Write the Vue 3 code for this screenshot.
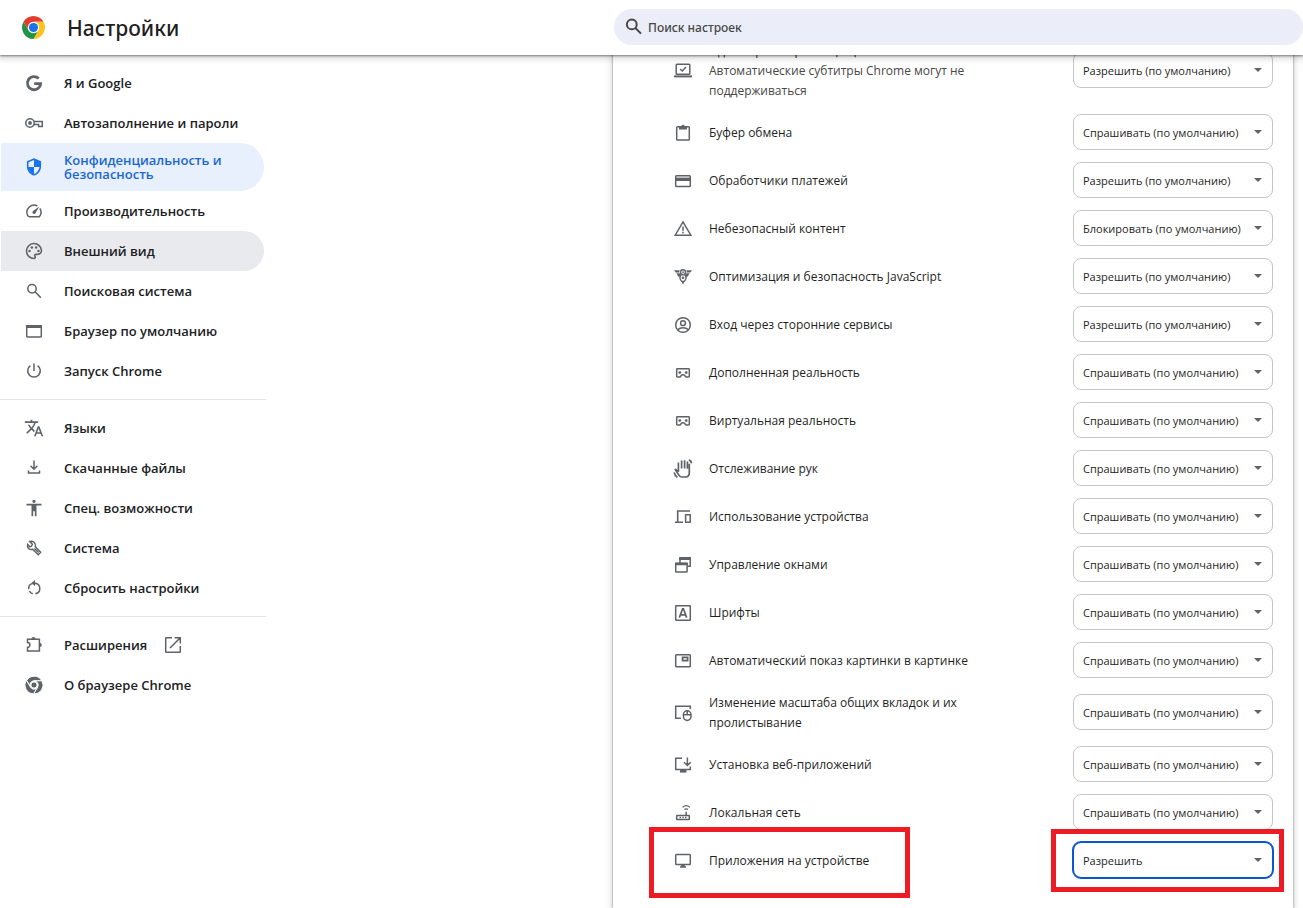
<template>
  <div class="settings">
    <header class="toolbar">
      <div class="brand">
        <svg class="logo" viewBox="0 0 48 48" aria-hidden="true">
          <circle cx="24" cy="24" r="12" fill="#fff" />
          <path fill="#e33b2e" d="M24 12H44.78a24 24 0 0 0-41.56 0L13.61 30A12 12 0 0 1 24 12Z" />
          <path fill="#fcc31e" d="M34.39 30 24 48A24 24 0 0 0 44.78 12H24A12 12 0 0 1 34.39 30Z" />
          <path fill="#229342" d="M13.61 30 3.22 12A24 24 0 0 0 24 48L34.39 30A12 12 0 0 1 13.61 30Z" />
          <circle cx="24" cy="24" r="9.5" fill="#1a73e8" />
        </svg>
        <h1>Настройки</h1>
      </div>
      <label class="search">
        <svg class="icon" viewBox="0 0 20 20" aria-hidden="true">
          <circle cx="7.8" cy="7.4" r="4.9" />
          <path d="M11.4 11 17 16.6" />
        </svg>
        <input v-model="query" type="text" placeholder="Поиск настроек" aria-label="Поиск настроек" />
      </label>
    </header>

    <div class="content">
      <nav class="menu">
        <div v-for="(group, i) in menu" :key="i" class="menu-group">
          <a
            v-for="item in group"
            :key="item.label"
            href="#"
            class="menu-item"
            :class="{ active: item.active, hovered: item.hovered }"
            @click.prevent
          >
            <svg class="icon" :viewBox="ICONS[item.icon].box" aria-hidden="true" v-html="ICONS[item.icon].body"></svg>
            <span>{{ item.label }}</span>
            <svg v-if="item.external" class="icon external" viewBox="0 0 20 20" aria-hidden="true" v-html="ICONS.external.body"></svg>
          </a>
        </div>
      </nav>

      <main class="card">
        <div v-for="row in rows" :key="row.id" class="row">
          <svg class="icon" :viewBox="ICONS[row.icon].box" aria-hidden="true" v-html="ICONS[row.icon].body"></svg>
          <label :for="row.id" class="row-label">
            {{ row.label }}
            <span v-if="row.sub" class="row-sub">{{ row.sub }}</span>
          </label>
          <div class="select-wrap">
            <select :id="row.id" v-model="row.value" :class="{ focused: row.marked }">
              <option v-for="option in OPTIONS" :key="option">{{ option }}</option>
            </select>
          </div>
          <template v-if="row.marked">
            <div class="mark mark-label"></div>
            <div class="mark mark-select"></div>
          </template>
        </div>
      </main>
    </div>
  </div>
</template>

<script setup>
import { ref } from "vue";

const ASK = "Спрашивать (по умолчанию)";
const ALLOW = "Разрешить (по умолчанию)";
const BLOCK = "Блокировать (по умолчанию)";
const OPTIONS = [ASK, ALLOW, BLOCK, "Разрешить"];

const SOLID = 'fill="currentColor" stroke="none"';

function icon(body, size = 20) {
  return { box: `0 0 ${size} ${size}`, body };
}

function solid(d) {
  return icon(`<path ${SOLID} d="${d}"/>`, 24);
}

const ICONS = {
  google: icon('<path stroke-width="2.8" d="M14.7 5.5A6.6 6.6 0 1 0 16.6 10.6H10.2"/>'),
  key: icon(`<circle cx="6" cy="10" r="4.2"/><circle ${SOLID} cx="6" cy="10" r="1.9"/><path d="M10 8.4H18.3V13.4H14.6V11.6H10"/>`),
  shield: solid("M12 1.5 3.5 5v6c0 5.4 3.6 10 8.5 11.3 4.9-1.3 8.5-5.9 8.5-11.3V5L12 1.5zM12 12h6.6c-.5 4-3 7.1-6.6 8.3V12H5.4V6.3L12 3.6V12z"),
  speed: icon(`<path d="M5 15.7H15.3A7.2 7.2 0 0 0 15.9 7.4M13.4 5A7.2 7.2 0 0 0 3.7 14.6L5 15.7"/><path ${SOLID} d="M15.2 5.6 11.6 12a1.7 1.7 0 1 1-2.6-2.1z"/>`),
  palette: icon(
    `<path stroke-width="1.9" d="M12 21a9 9 0 1 1 9-9.8c0 3-2.3 4.8-5 4.8h-1.8c-1.2 0-1.9 1.3-1.1 2.3 1 1.3.2 2.7-1.1 2.7z"/><g ${SOLID}><circle cx="6.6" cy="12" r="1.5"/><circle cx="9.4" cy="7.7" r="1.5"/><circle cx="14.6" cy="7.7" r="1.5"/><circle cx="17.4" cy="12" r="1.5"/></g>`,
    24
  ),
  search: icon('<circle cx="8" cy="7.7" r="4.2"/><path d="M11 10.8 16.8 16.6"/>'),
  browser: icon(`<rect x="2.7" y="4.7" width="14.6" height="11.2" rx=".6"/><path ${SOLID} d="M2 4h16v3H2z"/>`),
  power: icon('<path d="M10 2.5V10M6.4 4.6A6.3 6.3 0 1 0 13.6 4.6"/>'),
  translate: solid(
    "M12.87 15.07l-2.54-2.51.03-.03c1.74-1.94 2.98-4.17 3.71-6.53H17V4h-7V2H8v2H1v1.99h11.17C11.5 7.92 10.44 9.75 9 11.35 8.07 10.32 7.3 9.19 6.69 8h-2c.73 1.63 1.73 3.17 2.98 4.56l-5.09 5.02L4 19l5-5 3.11 3.11.76-2.04zM18.5 10h-2L12 22h2l1.12-3h4.75L21 22h2l-4.5-12zm-2.62 7l1.62-4.33L19.12 17h-3.24z"
  ),
  download: icon('<path d="M10 2.5V11M6.6 7.8 10 11.2 13.4 7.8M4.5 12.4V15.1H15.5V12.4"/>'),
  accessibility: solid("M12 2a2 2 0 1 1 0 4 2 2 0 0 1 0-4zM21 9h-6v13h-2v-6h-2v6H9V9H3V7h18v2z"),
  wrench: icon('<path stroke-width="1.4" d="M5.6 3.4 8.4 6.2 7.6 8 5.8 8.8 3.6 6.4C2.6 9.6 5.4 12.2 8.7 11.3L14.2 16.8 16.7 14.3 11.3 8.7C12.2 5.4 9.4 2.4 5.6 3.4ZM10.4 10.4 14.6 14.6"/>'),
  reset: icon(`<path d="M11 5.2A5.3 5.3 0 0 1 11.4 15.7M8.8 15.7A5.3 5.3 0 0 1 5.4 13M4.8 11.2A5.3 5.3 0 0 1 8.6 5.4"/><path ${SOLID} d="M11 2V8.2L7.4 5.1z"/>`),
  extension: icon(`<path d="M3.5 4.2H15.4V15.9H3.5V12.4A2.4 2.4 0 0 0 3.5 7.6Z"/><path ${SOLID} d="M7.4 4a2 2 0 0 1 4 0zM15.8 8a2 2 0 0 1 0 4z"/>`),
  external: icon('<path d="M9 2.7H3.4A.7.7 0 0 0 2.7 3.4V16.6A.7.7 0 0 0 3.4 17.3H16.6A.7.7 0 0 0 17.3 16.6V11M11.6 2.7H17.3V8.4M17 3 7 13"/>'),
  chrome: icon(
    `<g fill="currentColor" stroke="#fff" stroke-width="2.4"><path d="M24 14H43a21 21 0 0 0-36.6-.8L15.3 29A10 10 0 0 1 24 14Z"/><path d="M32.7 29 22.8 45A21 21 0 0 0 43.2 14H24A10 10 0 0 1 32.7 29Z"/><path d="M15.3 29 5.6 12.6A21 21 0 0 0 23 45L32.7 29A10 10 0 0 1 15.3 29Z"/><circle cx="24" cy="24" r="7.5"/></g>`,
    48
  ),

  captions: icon(`<rect x="3.2" y="3.2" width="13.6" height="10" rx=".8"/><path d="M7.2 8 9.3 10 13 6"/><path ${SOLID} d="M1 14.4h18v2H1z"/>`),
  clipboard: icon(`<rect x="3.7" y="3.7" width="12.6" height="13.3" rx=".8"/><path ${SOLID} d="M6 3h2.4a1.7 1.7 0 0 1 3.2 0H14V6.4H6z"/>`),
  payment: icon(`<rect x="2.7" y="4.7" width="14.6" height="10.8" rx=".8"/><path ${SOLID} d="M2.7 6.6h14.6v3.4H2.7z"/>`),
  warning: icon('<path d="M10 2.9 17.8 16.2H2.2ZM10 7.4V11.8M10 12.8V14.4"/>'),
  javascript: icon(
    `<g stroke-width="1.4"><circle cx="10" cy="5.2" r="2.5"/><path d="M8.5 7.4Q6.6 9 7 11.2 7.4 13.4 8.8 14.4H11.2Q12.6 13.4 13 11.2 13.4 9 11.5 7.4"/></g><g ${SOLID}><path d="M1 3.2h5.6L6.2 5.4H2.6zM19 3.2h-5.6l.4 2.2h3.6zM3.4 6.2h3.2l.8 1.4-.8 2.2H5.4zM16.6 6.2h-3.2l-.8 1.4.8 2.2h1.2zM8.8 15h2.4L10 17.8z"/><circle cx="10" cy="5.2" r=".9"/><circle cx="10" cy="10.8" r="1.3"/></g>`
  ),
  account: icon('<circle cx="10" cy="10" r="7.3"/><circle cx="10" cy="8.2" r="2.4"/><path d="M4.7 14.6C7.5 12 12.5 12 15.3 14.6"/>'),
  vr: icon(`<path d="M4.4 5.7H15.6Q16.3 5.7 16.3 6.4V13.2Q16.3 13.9 15.6 13.9H13L10.8 11.8H9.2L7 13.9H4.4Q3.7 13.9 3.7 13.2V6.4Q3.7 5.7 4.4 5.7Z"/><g ${SOLID}><circle cx="6.8" cy="9.6" r="1.4"/><circle cx="13.2" cy="9.6" r="1.4"/></g>`),
  hand: icon(
    '<path stroke-width="1.7" d="M5.4 12.8V3.4M5.4 12.8 2 10 6 16.4Q7 18 9 18H12.4Q16.3 17.8 16.3 14V4.8M8.6 1.4V9.4M11.6 1.2V9.4M14.4 2.6V9.8M15.8 1.2Q18.4 1.5 18.5 4.4M1.2 13.4Q1.6 16.6 4.4 18.2"/>'
  ),
  device: icon('<path stroke-width="1.6" d="M17 4H4.7V14.8M2 15.2H10"/><rect x="12.6" y="7.8" width="4.6" height="7.4"/>'),
  windows: icon(
    `<path d="M7 8V3.2H17.2V11.2H14.4"/><rect x="2.7" y="8.4" width="11.4" height="8.6" rx=".6"/><g ${SOLID}><path d="M6.2 2H18V5H6.2zM2 7.6h12.8v2.6H2z"/></g>`
  ),
  fonts: icon('<rect x="2.7" y="2.7" width="14.6" height="14.6" rx=".5"/><path stroke-width="1.7" d="M6.3 14.6 9.6 5.8H10.4L13.7 14.6M7.5 11.8H12.5"/>'),
  pip: icon('<rect x="2.7" y="3.8" width="14.6" height="12" rx=".8"/><rect x="9.6" y="6.4" width="5" height="3.2" stroke-width="1.8"/>'),
  zoom: icon('<path d="M8 15.2H2.7V3.2H17.3V6"/><rect x="10.4" y="7.8" width="7.6" height="9.6" rx="3.8"/><path d="M14.2 7.8V11.6M10.4 11.8H18"/>'),
  install: icon(`<path d="M9 3.2H2.7V14.6H17.3V11.6M14.4 2.4V10.2M11 7.2 14.4 10.4 17.8 7.2"/><path ${SOLID} d="M7 15h6.4v2.6H7z"/>`),
  router: icon(
    `<rect x="3.7" y="12.6" width="12.6" height="4" rx=".4"/><path d="M6.5 14.6H8M9.3 14.6H10.8M12 14.6H13.5M13.2 8.8V12.6"/><path stroke-width="1.3" d="M9.6 4.2Q13.2 1.2 16.8 4.2M11.4 6.6Q13.2 5.2 15 6.6"/>`
  ),
  monitor: icon(`<rect x="2.7" y="3.4" width="14.6" height="10.2" rx=".8"/><path ${SOLID} d="M8.2 13.6h3.6v1.6H13v1.6H7v-1.6h1.2z"/>`),
};

const query = ref("");

const menu = [
  [
    { icon: "google", label: "Я и Google" },
    { icon: "key", label: "Автозаполнение и пароли" },
    { icon: "shield", label: "Конфиденциальность и безопасность", active: true },
    { icon: "speed", label: "Производительность" },
    { icon: "palette", label: "Внешний вид", hovered: true },
    { icon: "search", label: "Поисковая система" },
    { icon: "browser", label: "Браузер по умолчанию" },
    { icon: "power", label: "Запуск Chrome" },
  ],
  [
    { icon: "translate", label: "Языки" },
    { icon: "download", label: "Скачанные файлы" },
    { icon: "accessibility", label: "Спец. возможности" },
    { icon: "wrench", label: "Система" },
    { icon: "reset", label: "Сбросить настройки" },
  ],
  [
    { icon: "extension", label: "Расширения", external: true },
    { icon: "chrome", label: "О браузере Chrome" },
  ],
];

const rows = ref([
  {
    id: "protected",
    icon: "captions",
    label: "Идентификаторы защищенного контента",
    sub: "Автоматические субтитры Chrome могут не поддерживаться",
    value: ALLOW,
  },
  { id: "clipboard", icon: "clipboard", label: "Буфер обмена", value: ASK },
  { id: "payment", icon: "payment", label: "Обработчики платежей", value: ALLOW },
  { id: "insecure", icon: "warning", label: "Небезопасный контент", value: BLOCK },
  { id: "javascript", icon: "javascript", label: "Оптимизация и безопасность JavaScript", value: ALLOW },
  { id: "signin", icon: "account", label: "Вход через сторонние сервисы", value: ALLOW },
  { id: "ar", icon: "vr", label: "Дополненная реальность", value: ASK },
  { id: "vr", icon: "vr", label: "Виртуальная реальность", value: ASK },
  { id: "hands", icon: "hand", label: "Отслеживание рук", value: ASK },
  { id: "device", icon: "device", label: "Использование устройства", value: ASK },
  { id: "windows", icon: "windows", label: "Управление окнами", value: ASK },
  { id: "fonts", icon: "fonts", label: "Шрифты", value: ASK },
  { id: "pip", icon: "pip", label: "Автоматический показ картинки в картинке", value: ASK },
  { id: "zoom", icon: "zoom", label: "Изменение масштаба общих вкладок и их пролистывание", value: ASK },
  { id: "install", icon: "install", label: "Установка веб-приложений", value: ASK },
  { id: "network", icon: "router", label: "Локальная сеть", value: ASK },
  { id: "apps", icon: "monitor", label: "Приложения на устройстве", value: "Разрешить", marked: true },
]);
</script>

<style>
body {
  margin: 0;
  overflow: hidden;
  background: #fff;
}
</style>

<style scoped>
.settings {
  display: flex;
  flex-direction: column;
  height: 100vh;
  overflow: hidden;
  color: #1f1f1f;
  font-family: "Open Sans", "Noto Sans", sans-serif;
  font-size: 12px;
}

.icon {
  flex: none;
  width: 20px;
  height: 20px;
  color: #5f6368;
  fill: none;
  stroke: currentColor;
  stroke-width: 1.5;
}

.toolbar,
.content {
  display: grid;
  grid-template-columns: 266px minmax(0, 690px);
  justify-content: space-between;
}

.toolbar {
  position: relative;
  z-index: 1;
  flex: none;
  align-items: center;
  height: 55px;
  background: #fff;
  box-shadow: 0 1px 2px rgba(0, 0, 0, 0.45), 0 2px 6px 2px rgba(0, 0, 0, 0.15);
}

.brand {
  display: flex;
  align-items: center;
  gap: 22px;
  padding-left: 22px;
}

.logo {
  width: 23px;
  height: 23px;
}

.brand h1 {
  margin: 0;
  font-family: "Noto Sans", sans-serif;
  font-size: 21px;
  font-weight: 500;
  line-height: 28px;
}

.search {
  display: flex;
  align-items: center;
  gap: 4px;
  height: 36px;
  margin: 0 0 1px 1px;
  padding: 0 10px;
  border-radius: 18px;
  background: #ebeef8;
}

.search .icon {
  color: #474747;
  stroke-width: 2;
}

.search input {
  flex: 1;
  min-width: 0;
  padding: 0;
  border: 0;
  outline: 0;
  background: none;
  color: #1f1f1f;
  font-family: "Noto Sans", sans-serif;
  font-size: 12px;
  font-weight: 500;
}

.search input::placeholder {
  color: #474747;
  opacity: 1;
}

.content {
  flex: 1;
  min-height: 0;
}

.menu {
  padding-top: 8px;
}

.menu-group + .menu-group {
  margin-top: 8px;
  padding-top: 8px;
  border-top: 1px solid #e4e5e7;
}

.menu-item {
  display: flex;
  align-items: center;
  gap: 20px;
  min-height: 40px;
  margin: 0 2px 0 1px;
  padding: 0 16px 0 23px;
  border-radius: 0 24px 24px 0;
  color: #202124;
  font-size: 13px;
  font-weight: 600;
  line-height: 14px;
  text-decoration: none;
}

.menu-item.active {
  min-height: 48px;
  background: #e8f0fe;
  color: #1967d2;
}

.menu-item.active .icon {
  color: #1a73e8;
}

.menu-item.hovered {
  background: #e8eaed;
}

.menu-item .external {
  margin-left: -4px;
}

.card {
  margin: -23px 10px 0 0;
  background: #fff;
  box-shadow: 0 0 2px rgba(0, 0, 0, 0.5), 0 2px 6px 2px rgba(0, 0, 0, 0.12);
}

.row {
  position: relative;
  display: flex;
  align-items: center;
  gap: 16px;
  box-sizing: border-box;
  min-height: 48px;
  padding: 9px 20px 7px 60px;
}

.row-label {
  max-width: 300px;
  line-height: 20px;
}

.row-sub {
  display: block;
  color: #474747;
}

.select-wrap {
  position: relative;
  flex: none;
  height: 36px;
  margin: -5px 0 -3px auto;
}

.select-wrap::after {
  content: "";
  position: absolute;
  top: 16px;
  right: 11px;
  border: 4px solid transparent;
  border-top-color: #5f6368;
  border-bottom: 0;
  pointer-events: none;
}

select {
  width: 200px;
  height: 36px;
  padding: 0 24px 0 9px;
  border: 1px solid #c4c7c5;
  border-radius: 8px;
  appearance: none;
  background: #fff;
  color: #1f1f1f;
  font-family: inherit;
  font-size: 11px;
}

select.focused {
  outline: 2px solid #0b57d0;
  outline-offset: -1px;
}

.mark {
  position: absolute;
  box-sizing: border-box;
  border: 5px solid #ed1c24;
  pointer-events: none;
}

.mark-label {
  top: -9px;
  left: 36px;
  width: 261px;
  height: 71px;
}

.mark-select {
  top: -7px;
  right: 9px;
  width: 233px;
  height: 63px;
}
</style>
